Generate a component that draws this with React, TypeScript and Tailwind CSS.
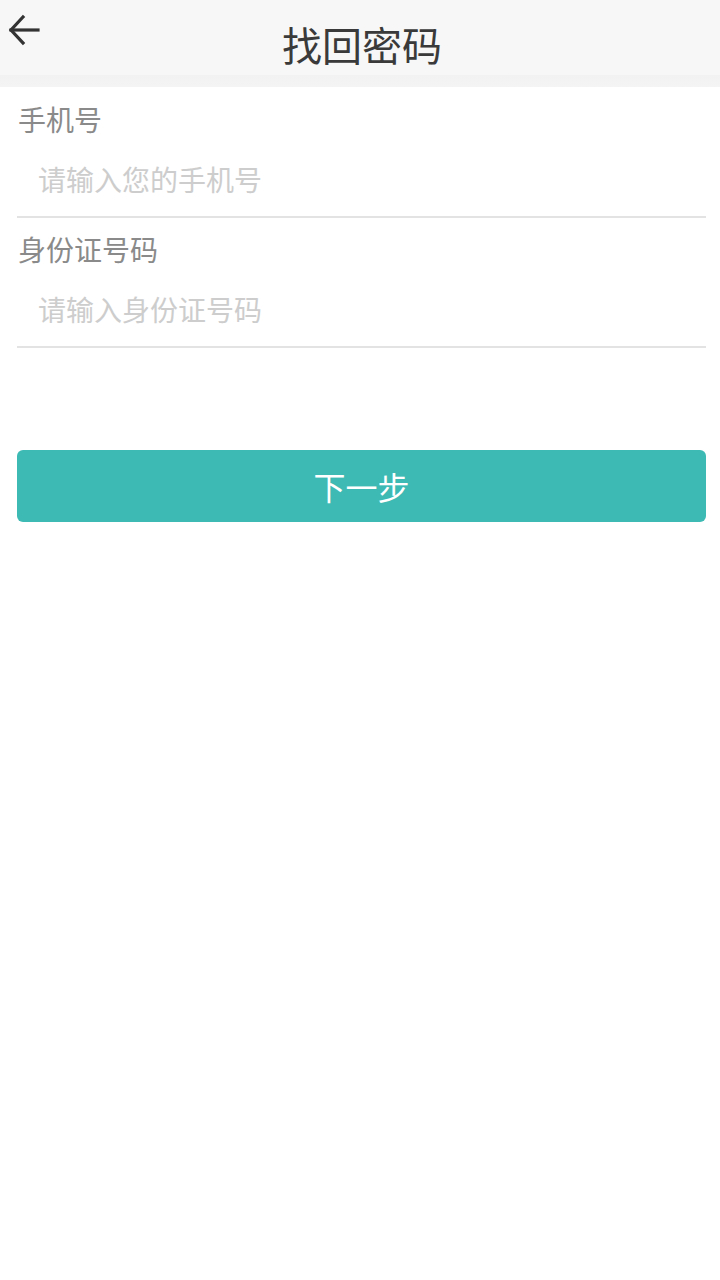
import React from 'react';

const font = { fontFamily: '"Noto Sans CJK SC", "Noto Sans", sans-serif' };

const Field: React.FC<{ label: string; placeholder: string }> = ({ label, placeholder }) => (
  <div className="ml-[17px] mr-[14px] border-b-2 border-[#e3e3e3]">
    <div className="pt-[14px] pl-px text-[28px] leading-[36px] text-[#8a8a8a]">{label}</div>
    <input
      className="block w-full h-[79px] pl-[21px] pt-[4px] text-[28px] text-[#333] outline-none bg-transparent placeholder:text-[#cdcdcd]"
      style={font}
      placeholder={placeholder}
    />
  </div>
);

export default function App() {
  return (
    <div className="w-[720px] h-[1280px] bg-white" style={font}>
      <div className="relative h-[75px] bg-[#f7f7f7] flex items-center justify-center">
        <button className="absolute left-[6px] top-[12px] w-[36px] h-[36px] flex items-center justify-center">
          <svg width="34" height="34" viewBox="0 0 34 34" fill="none" stroke="#333" strokeWidth="3.2" strokeLinecap="square">
            <path d="M4 17 H31" />
            <path d="M16 4 L4 17 L16 30" strokeLinejoin="miter" />
          </svg>
        </button>
        <h1 className="text-[40px] leading-none text-[#3a3a3a] pt-[12px] pl-[4px]">找回密码</h1>
      </div>
      <div className="h-[12px] bg-gradient-to-b from-[#f2f2f2] to-[#f4f4f4]" />
      <Field label="手机号" placeholder="请输入您的手机号" />
      <div className="-mt-px">
        <Field label="身份证号码" placeholder="请输入身份证号码" />
      </div>
      <div className="pl-[17px] pr-[14px] pt-[102px]">
        <button className="w-full h-[72px] rounded-[6px] bg-[#3dbab4] text-white text-[32px]" style={font}>
          下一步
        </button>
      </div>
    </div>
  );
}
